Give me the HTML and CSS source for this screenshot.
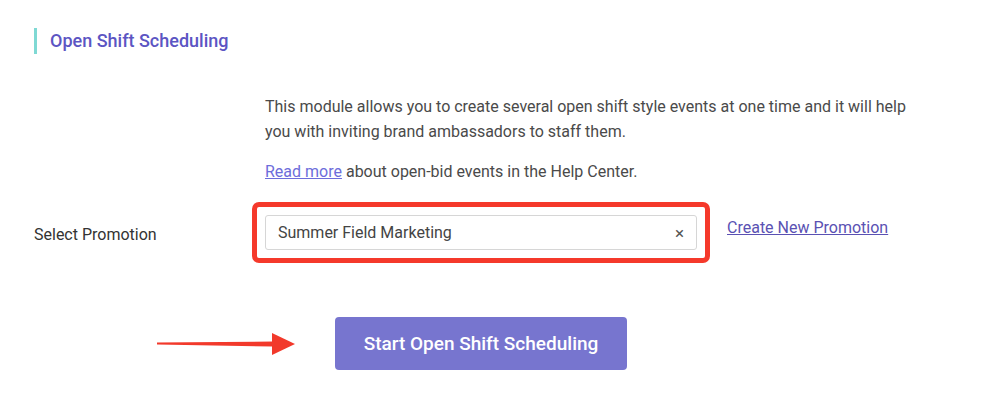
FILE: index.html
```html
<!DOCTYPE html>
<html lang="en">
<head>
    <meta charset="UTF-8">
    <title>Open Shift Scheduling</title>
    <link rel="stylesheet" href="styles.css">
</head>
<body>
    <div class="page">
        <h2 class="section-title">Open Shift Scheduling</h2>

        <div class="intro">
            <p>This module allows you to create several open shift style events at one time and it will help you with inviting brand ambassadors to staff them.</p>
            <p><a href="#" class="read-more">Read more</a> about open-bid events in the Help Center.</p>
        </div>

        <div class="form-row">
            <label class="form-label">Select Promotion</label>
            <div class="highlight">
                <div class="select-box">
                    <span class="select-value">Summer Field Marketing</span>
                    <span class="select-clear">&times;</span>
                </div>
            </div>
            <a href="#" class="create-link">Create New Promotion</a>
        </div>

        <div class="action-row">
            <svg class="arrow" width="140" height="24" viewBox="0 0 140 24">
                <polygon points="0,10.5 116,9.5 116,14.5 0,12.5" fill="#f2392b"/>
                <polygon points="115,1 138,12 115,23" fill="#f2392b"/>
            </svg>
            <button class="start-button">Start Open Shift Scheduling</button>
        </div>
    </div>
</body>
</html>
```

FILE: styles.css
```css
body {
    margin: 0;
    font-family: Roboto, "Liberation Sans", sans-serif;
    background-color: #ffffff;
    color: #4a4a4a;
}
.page {
    padding: 28px 0 0 34px;
}
.section-title {
    margin: 0;
    border-left: 3px solid #7fd9d4;
    padding-left: 13px;
    height: 26px;
    line-height: 26px;
    font-size: 18px;
    font-weight: 500;
    color: #5c55c3;
}
.intro {
    margin: 40px 0 0 231px;
    width: 655px;
    font-size: 16px;
    line-height: 25px;
}
.intro p {
    margin: 0 0 15px 0;
}
.intro p:last-child {
    margin-bottom: 0;
}
.read-more {
    color: #6d6ddb;
}
.form-row {
    display: flex;
    align-items: flex-start;
    margin-top: 18px;
}
.form-label {
    width: 218px;
    padding-top: 23px;
    font-size: 16px;
    line-height: 20px;
    color: #333333;
}
.highlight {
    border: 5px solid #f5392b;
    border-radius: 7px;
    padding: 8px;
}
.select-box {
    display: flex;
    align-items: center;
    justify-content: space-between;
    box-sizing: border-box;
    width: 432px;
    height: 35px;
    padding: 0 12px;
    border: 1px solid #d6d6d6;
    border-radius: 3px;
    font-size: 16px;
    color: #444444;
}
.select-clear {
    font-size: 17px;
    color: #555555;
}
.create-link {
    margin: 16px 0 0 17px;
    font-size: 16px;
    line-height: 20px;
    color: #5a51b3;
}
.action-row {
    display: flex;
    align-items: center;
    margin-top: 54px;
}
.arrow {
    margin-left: 123px;
    margin-right: 38px;
}
.start-button {
    width: 292px;
    height: 53px;
    border: none;
    border-radius: 4px;
    background-color: #7775cf;
    color: #ffffff;
    font-family: Roboto, "Liberation Sans", sans-serif;
    font-size: 19px;
    font-weight: 500;
}
```
